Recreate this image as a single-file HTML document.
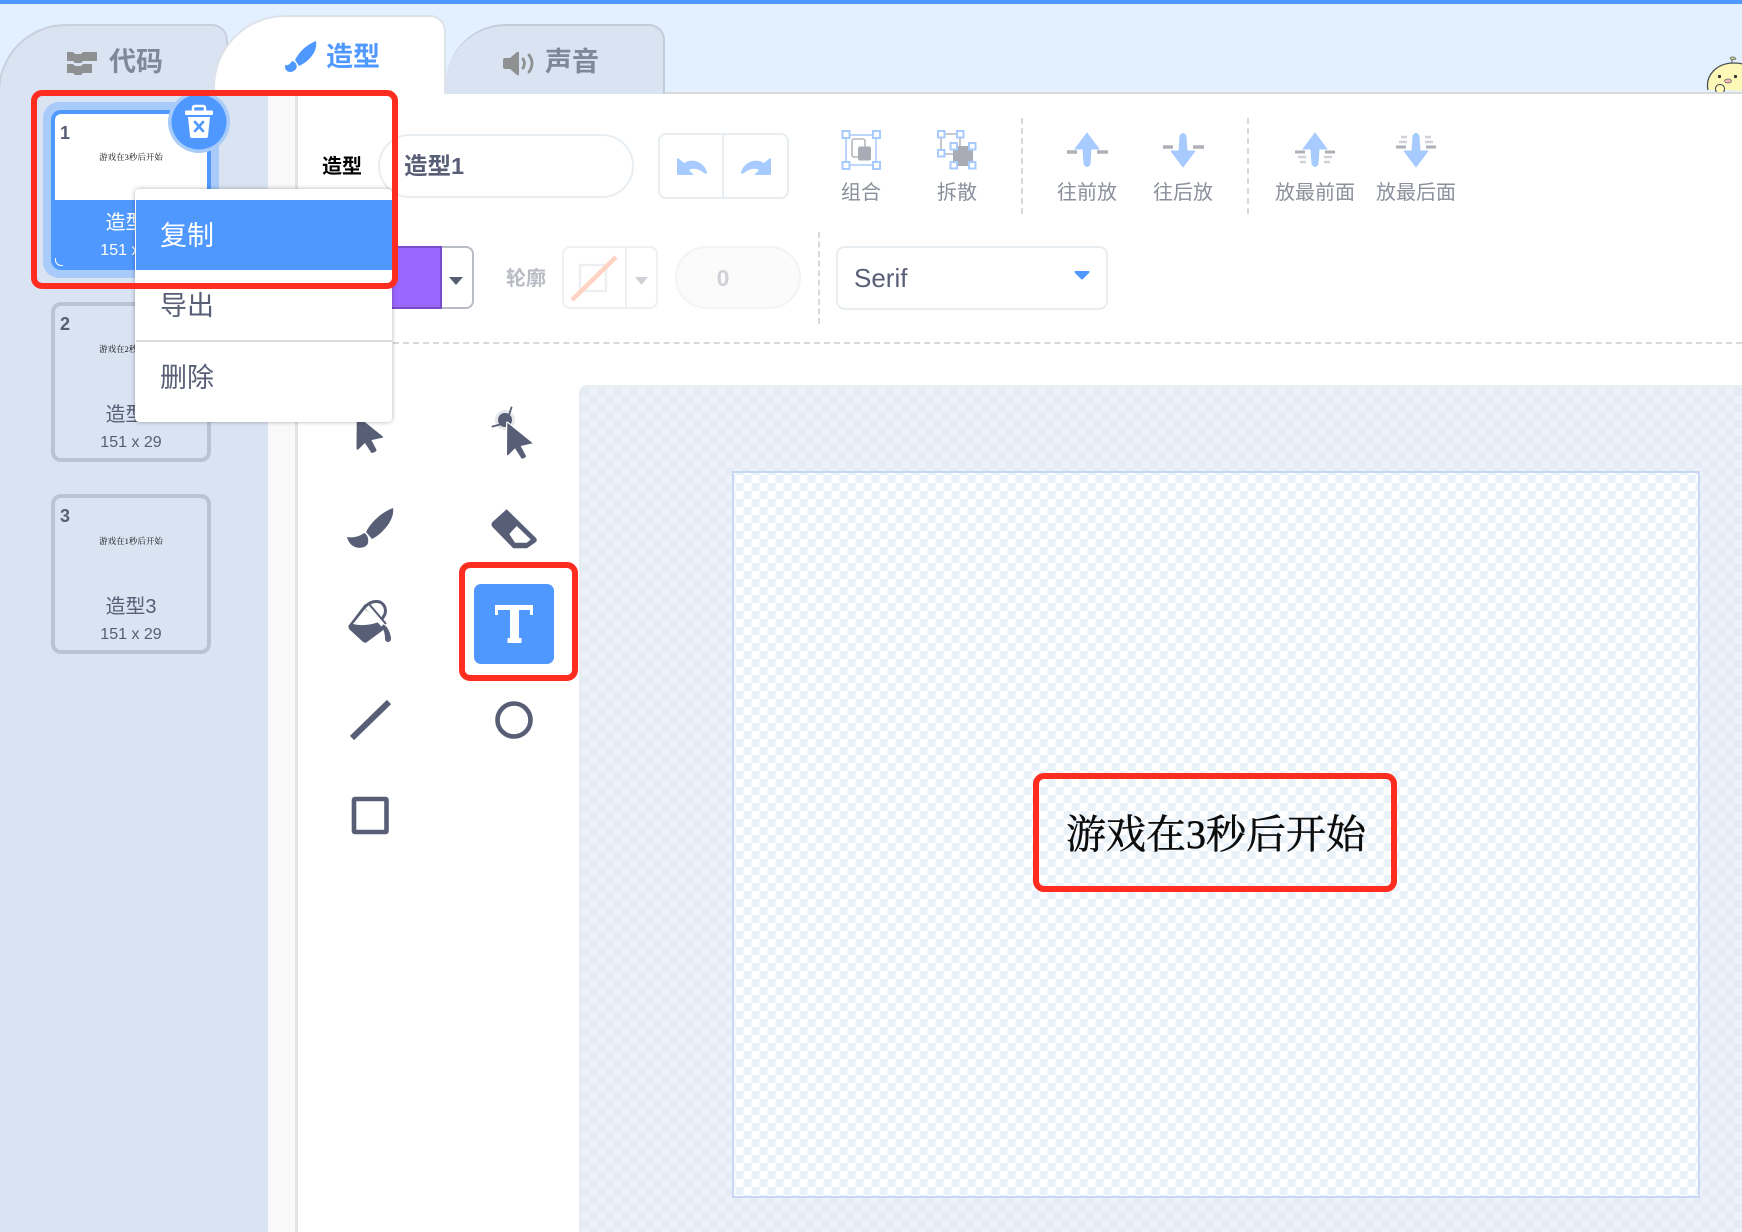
<!DOCTYPE html>
<html lang="zh">
<head>
<meta charset="utf-8">
<title>造型</title>
<style>
html,body{margin:0;padding:0;background:#fff}
#p{position:relative;width:1742px;height:1232px;overflow:hidden;background:#fff;font-family:"Liberation Sans","Noto Sans CJK SC",sans-serif;color:#575e75}
#p div{position:absolute;box-sizing:border-box}
.t{white-space:nowrap;line-height:1}
.c{transform:translateX(-50%)}
.card{left:51px;width:160px;height:160px;border:4px solid #b9c3d3;border-radius:10px}
.thumb{font-family:"Liberation Serif","Noto Serif CJK SC",serif;font-size:8.5px;color:#111;left:131px}
.lbl{left:131px;font-size:20px;color:#575e75}
.sz{left:131px;font-size:16px;color:#575e75}
.num{left:60px;font-size:18px;font-weight:700;color:#575e75}
.tb{font-size:20px;color:#8b8f9c}
.red{border:6px solid #ff2d20;border-radius:11px}
</style>
</head>
<body>
<div id="p">
  <!-- header -->
  <div style="left:0;top:0;width:1742px;height:93px;background:#e3f0ff"></div>
  <div style="left:0;top:0;width:1742px;height:4px;background:#4f98ff"></div>
  <!-- chick -->
  <svg style="position:absolute;left:1700px;top:50px" width="42" height="44" viewBox="1700 50 42 44">
    <path d="M1708 90C1705 76 1716 63 1734 63C1737 63 1740 63 1742 64V91L1728 90Z" fill="#fdf8b7" stroke="none"/>
    <path d="M1708 90C1705 76 1716 63 1734 63C1737 63 1740 63 1742 64" fill="none" stroke="#4c4f57" stroke-width="1.3"/>
    <path d="M1732 63V58" stroke="#666" stroke-width="1.2"/>
    <path d="M1730 58c2-2 5-1 6 1c-2 1-5 1-6-1z" fill="#c9d890" stroke="#666" stroke-width=".8"/>
    <circle cx="1719.500" cy="76.500" r="1.600" fill="#333"/><circle cx="1735.500" cy="76.500" r="1.600" fill="#333"/>
    <ellipse cx="1728" cy="81" rx="3.400" ry="2" fill="#f2b8b8" stroke="#666" stroke-width=".7"/>
    <circle cx="1720" cy="89" r="4.600" fill="#fdf8b7" stroke="#4c4f57" stroke-width="1.100"/>
  </svg>
  <div style="left:0;top:92px;width:1742px;height:2px;background:#d9d9d9"></div>

  <!-- tabs -->
  <div style="left:-2px;top:24px;width:230px;height:70px;background:#d9e3f2;border:2px solid #c8d0dd;border-bottom:0;border-radius:68px 16px 0 0/68px 16px 0 0"></div>
  <div style="left:446px;top:24px;width:219px;height:70px;background:#d9e3f2;border:2px solid #c3ccd9;border-bottom:0;border-left:0;border-radius:60px 16px 0 0/60px 16px 0 0"></div>
  <div style="left:213px;top:15px;width:233px;height:79px;background:#fff;border:2px solid #dde2e9;border-bottom:0;border-radius:72px 16px 0 0/72px 16px 0 0"></div>
  <div class="t" style="left:109px;top:49px;font-size:27px;font-weight:700;color:#7f8898">代码</div>
  <div class="t" style="left:326px;top:44px;font-size:27px;font-weight:700;color:#4f98ff">造型</div>
  <div class="t" style="left:545px;top:49px;font-size:27px;font-weight:700;color:#7f8898">声音</div>

  <!-- sidebar -->
  <div style="left:0;top:94px;width:268px;height:1138px;background:#d9e3f2"></div>
  <div style="left:268px;top:94px;width:28px;height:1138px;background:#f9f9f9"></div>
  <div style="left:295px;top:94px;width:3px;height:1138px;background:#e3e3e3"></div>

  <!-- cards -->
  <div style="left:43px;top:102px;width:176px;height:176px;background:#a9cbf9;border-radius:16px"></div>
  <div style="left:51px;top:110px;width:160px;height:160px;background:#4f98ff;border-radius:10px"></div>
  <div style="left:55px;top:114px;width:152px;height:86px;background:#fff;border-radius:6px 6px 0 0"></div>
  <div class="t num" style="top:124px;">1</div>
  <div class="t thumb c" style="top:153px">游戏在3秒后开始</div>
  <div class="t lbl c" style="top:213px;color:#fff">造型1</div>
  <div class="t sz c" style="top:243px;color:#fff">151 x 29</div>
  <div style="left:55px;top:258px;width:8px;height:8px;border-left:1px solid #fff;border-bottom:1px solid #fff;border-radius:0 0 0 6px"></div>

  <div class="card" style="top:302px"></div>
  <div class="t num" style="top:315px">2</div>
  <div class="t thumb c" style="top:345px">游戏在2秒后开始</div>
  <div class="t lbl c" style="top:405px">造型2</div>
  <div class="t sz c" style="top:435px">151 x 29</div>

  <div class="card" style="top:494px"></div>
  <div class="t num" style="top:507px">3</div>
  <div class="t thumb c" style="top:537px">游戏在1秒后开始</div>
  <div class="t lbl c" style="top:597px">造型3</div>
  <div class="t sz c" style="top:627px">151 x 29</div>

  <!-- name row -->
  <div class="t" style="left:322px;top:157px;font-size:20px;font-weight:700;color:#000">造型</div>
  <div style="left:378px;top:134px;width:256px;height:64px;border:2px solid #e8edf1;border-radius:32px;background:#fff"></div>
  <div class="t" style="left:404px;top:155px;font-size:23.500px;font-weight:700;color:#575e75">造型1</div>
  <div style="left:658px;top:133px;width:131px;height:66px;border:2px solid #e8edf1;border-radius:8px"></div>
  <div style="left:722px;top:134px;width:2px;height:64px;background:#e8edf1"></div>

  <div class="t tb c" style="left:861px;top:183px">组合</div>
  <div class="t tb c" style="left:957px;top:183px">拆散</div>
  <div class="t tb c" style="left:1087px;top:183px">往前放</div>
  <div class="t tb c" style="left:1183px;top:183px">往后放</div>
  <div class="t tb c" style="left:1315px;top:183px">放最前面</div>
  <div class="t tb c" style="left:1416px;top:183px">放最后面</div>
  <div style="left:1021px;top:118px;height:96px;border-left:2px dashed #d9d9d9"></div>
  <div style="left:1247px;top:118px;height:96px;border-left:2px dashed #d9d9d9"></div>

  <!-- row 2 -->
  <div style="left:380px;top:246px;width:62px;height:63px;background:#9966ff;border-top:2px solid #774dcb;border-bottom:2px solid #774dcb;border-right:2px solid #774dcb"></div>
  <div style="left:442px;top:246px;width:32px;height:63px;background:#fff;border:2px solid #b8bcc4;border-left:0;border-radius:0 8px 8px 0"></div>
  <div class="t" style="left:506px;top:269px;font-size:20px;color:#b8bbc3;font-weight:700">轮廓</div>
  <div style="left:562px;top:246px;width:96px;height:63px;border:2px solid #eef1f4;border-radius:8px"></div>
  <div style="left:625px;top:247px;width:2px;height:61px;background:#eef1f4"></div>
  <div style="left:675px;top:246px;width:126px;height:63px;background:#fbfbfb;border:2px solid #f1f3f6;border-radius:32px"></div>
  <div class="t c" style="left:723px;top:267px;font-size:23px;font-weight:700;color:#cfd1d6">0</div>
  <div style="left:818px;top:232px;height:92px;border-left:2px dashed #d9d9d9"></div>
  <div style="left:836px;top:246px;width:272px;height:64px;border:2px solid #e8edf1;border-radius:9px"></div>
  <div class="t" style="left:854px;top:265px;font-size:26px;color:#575e75">Serif</div>
  <div style="left:393px;top:342px;width:1349px;height:0;border-top:2px dashed #d9d9d9"></div>

  <!-- canvas -->
  <div style="left:579px;top:385px;width:1170px;height:860px;border:3px solid #e8edf1;border-radius:8px;background-clip:padding-box;background-image:conic-gradient(#edf2fa 25%,#e5ecf6 0 50%,#edf2fa 0 75%,#e5ecf6 0);background-size:16px 16px;background-origin:padding-box"></div>
  <div style="left:732px;top:471px;width:968px;height:727px;border:2px solid #c6d8f3;background-clip:padding-box;background-origin:padding-box;background-image:conic-gradient(#e9f1fa 25%,#fff 0 50%,#e9f1fa 0 75%,#fff 0);background-size:16px 16px;background-position:1.500px 2px"></div>
  <div class="t" style="left:1066px;top:815px;font-size:40px;color:#0c0c0c;-webkit-text-stroke:.5px #0c0c0c;font-family:'Liberation Serif','Noto Serif CJK SC',serif">游戏在3秒后开始</div>

  <!-- text tool -->
  <div style="left:474px;top:584px;width:80px;height:80px;background:#4f98ff;border-radius:7px"></div>

  <!-- icons -->
  <svg style="position:absolute;left:0;top:0" width="1742" height="1232" viewBox="0 0 1742 1232">
    <!-- code icon -->
    <path d="M67 52h6l2 2h6l2-2h14v9H83l-2 2h-6l-2-2h-6zM67 64h6l2 2h6l2-2h9v9H83l-2 2h-6l-2-2h-6z" fill="#8f9092"/>
    <!-- tab brush -->
    <path d="M316 41C318 52 308 62 299 66L295 60C299 52 306 45 316 41Z" fill="#4f98ff"/>
    <path d="M292 61C297 62 298 68 295 70C291 74 284 72 285 65C288 66 290 64 292 61Z" fill="#4f98ff"/>
    <!-- speaker -->
    <path d="M503 60q0-2 2-2h5l7-6q2-1 2 1v21q0 2-2 1l-7-6h-5q-2 0-2-2z" fill="#8f9092"/>
    <path d="M523 59q3 4 0 9M529 55q6 8 0 17" fill="none" stroke="#8f9092" stroke-width="2.800" stroke-linecap="round"/>

    <!-- trash -->
    <circle cx="199" cy="122" r="31" fill="#a9cbf9"/>
    <circle cx="199" cy="122" r="27.500" fill="#4f98ff"/>
    <path d="M193 111v-3q0-2 2-2h8q2 0 2 2v3" fill="none" stroke="#fff" stroke-width="2.400"/>
    <rect x="185" y="110.500" width="28" height="4.500" rx="1" fill="#fff"/>
    <path d="M188 117h22l-2 19q0 2-2 2h-14q-2 0-2-2z" fill="#fff"/>
    <path d="M195 122l8 9M203 122l-8 9" stroke="#4f98ff" stroke-width="2.600" stroke-linecap="round"/>

    <!-- undo/redo -->
    <path d="M677 159q0-1 1-1l6 5C692 158 703 161 707 172Q707 175 704 173C698 168 692 168 689 170L694 175H678q-1 0-1-1Z" fill="#a8cbff"/>
    <path d="M771 159q0-1-1-1l-6 5C756 158 745 161 741 172Q741 175 744 173C750 168 756 168 759 170L754 175H770q1 0 1-1Z" fill="#a8cbff"/>

    <!-- group -->
    <rect x="846" y="135" width="30" height="30" fill="none" stroke="#bdd6fb" stroke-width="2"/>
    <rect x="852" y="139" width="13" height="18" rx="2" fill="#fff" stroke="#b5b7bd" stroke-width="1.600"/>
    <rect x="858" y="146.500" width="13" height="14" rx="2" fill="#a9acb4"/>
    <g fill="#fff" stroke="#a8cbff" stroke-width="2"><rect x="842.500" y="131" width="7" height="7"/><rect x="873" y="131" width="7" height="7"/><rect x="842.500" y="162" width="7" height="7"/><rect x="873" y="162" width="7" height="7"/></g>
    <!-- ungroup -->
    <path d="M941 134h19M941 134v20h12M960 134v12" stroke="#b5b7bd" stroke-width="1.600" fill="none"/>
    <rect x="953" y="146" width="20" height="20" fill="#a9acb4"/>
    <g fill="#fff" stroke="#a8cbff" stroke-width="2"><rect x="938" y="131" width="6.500" height="6.500"/><rect x="957" y="131" width="6.500" height="6.500"/><rect x="938" y="150" width="6.500" height="6.500"/><rect x="950.500" y="143" width="6.500" height="6.500"/><rect x="969" y="143" width="6.500" height="6.500"/><rect x="950.500" y="162" width="6.500" height="6.500"/><rect x="969" y="162" width="6.500" height="6.500"/></g>

    <!-- forward -->
    <path d="M1087 133L1099 149H1091L1090 164Q1087 169 1084 164L1083 149H1075Z" fill="#a8cbff" stroke="#a8cbff" stroke-linejoin="round"/>
    <path d="M1067 152H1077M1097 152H1108" stroke="#aeb0b7" stroke-width="3.400"/>
    <!-- backward -->
    <path d="M1183 167L1171 151H1179L1180 136Q1183 131 1186 136L1187 151H1195Z" fill="#a8cbff" stroke="#a8cbff" stroke-linejoin="round"/>
    <path d="M1163 147H1173M1193 147H1204" stroke="#aeb0b7" stroke-width="3.400"/>
    <!-- front -->
    <path d="M1315 133L1327 149H1319L1318 164Q1315 169 1312 164L1311 149H1303Z" fill="#a8cbff" stroke="#a8cbff" stroke-linejoin="round"/>
    <path d="M1295 152H1305M1325 152H1335" stroke="#aeb0b7" stroke-width="3"/>
    <path d="M1298 157H1306M1324 157H1332M1300 162H1306M1324 162H1330" stroke="#cfd1d6" stroke-width="2.600"/>
    <!-- back -->
    <path d="M1416 167L1404 151H1412L1413 136Q1416 131 1419 136L1420 151H1428Z" fill="#a8cbff" stroke="#a8cbff" stroke-linejoin="round"/>
    <path d="M1396 147H1406M1426 147H1436" stroke="#aeb0b7" stroke-width="3"/>
    <path d="M1399 142H1407M1425 142H1433M1401 137H1407M1425 137H1431" stroke="#cfd1d6" stroke-width="2.600"/>

    <!-- row 2 carets -->
    <path d="M449 277H463L456 285Z" fill="#575e75"/>
    <rect x="580" y="265" width="26" height="26" fill="none" stroke="#eceef1" stroke-width="2.400"/>
    <path d="M572 300L616 257" stroke="#ffd2c2" stroke-width="4.500"/>
    <path d="M635 277H648L641.500 285Z" fill="#cfd1d6"/>
    <path d="M1075 271H1089Q1090 271 1089 273L1083 279Q1082 280 1081 279L1075 273Q1074 271 1075 271Z" fill="#4f98ff"/>

    <!-- tools -->
    <g fill="#575e75">
      <path d="M507.300 422.700L532.700 443.300L520.700 446L526 456Q526 458 521.700 458.700L515 448.300L508.300 455Q507 456 507 454Z" transform="translate(-150,-6.200)" stroke="#575e75" stroke-linejoin="round"/>
      <circle cx="505" cy="420" r="10" fill="#e6e7ea"/>
      <circle cx="505" cy="420" r="7"/>
      <path d="M511.700 406.700L508 418M491.700 426.700L502 424" stroke="#575e75" stroke-width="1.800"/>
      <path d="M507.300 422.700L532.700 443.300L520.700 446L526 456Q526 458 521.700 458.700L515 448.300L508.300 455Q507 456 507 454Z" stroke="#fff" stroke-width="2.400" paint-order="stroke" stroke-linejoin="round"/>
      <path d="M393 508C395 520 382 534 372 539L366 532C371 522 382 512 393 508Z"/>
      <path d="M364 533C369 535 369 543 367 545C362 550 350 549 347 537C352 538 359 537 364 533Z"/>
      <path d="M506.700 509.300L536 538Q537.500 540 536 542L527 548.300H513.300L492.500 527Q490.500 524 492.500 522Z"/>
      <path d="M516.700 526L530.700 539.500L526.700 542.700H515L509.300 534Z" fill="#fff"/>
      <path d="M348.300 626L365 604L386 626.700L382 631L366 642.700Q364 643 362 641L349 629Z"/>
      <path d="M353 624L365 609L379 622Q365 627 353 624Z" fill="#fff"/>
      <path d="M366 606Q372 600 380 602Q387 606 385 614L381 621" fill="none" stroke="#575e75" stroke-width="3"/>
      <path d="M367 607L383 625" stroke="#fff" stroke-width="4.500"/>
      <path d="M369 604L386 624" stroke="#575e75" stroke-width="2"/>
      <path d="M386 626q4 5 5 12q0 4-3 4q-3 0-3-4q0-5-2-9z"/>
    </g>
    <path d="M352 738L389 702" stroke="#575e75" stroke-width="6"/>
    <circle cx="514" cy="720" r="16.500" fill="none" stroke="#575e75" stroke-width="4.600"/>
    <rect x="354" y="799" width="32.500" height="33" rx="1" fill="#fff" stroke="#575e75" stroke-width="4.600"/>
    <path d="M495 605H533V615H530V610H519V638H521.500V643H507.500V638H510V610H498V615H495Z" fill="#fff"/>
  </svg>

  <!-- menu -->
  <div style="left:135px;top:189px;width:257px;height:233px;background:#fff;border-radius:4px;box-shadow:0 0 5px rgba(0,0,0,.3)"></div>
  <div style="left:136px;top:200px;width:256px;height:70px;background:#4f98ff"></div>
  <div class="t" style="left:160px;top:222.500px;font-size:27px;color:#fff">复制</div>
  <div class="t" style="left:160px;top:293px;font-size:27px;color:#575e75">导出</div>
  <div style="left:136px;top:340px;width:256px;height:2px;background:#dcdcdc"></div>
  <div class="t" style="left:160px;top:364.500px;font-size:27px;color:#575e75">删除</div>

  <!-- red highlight boxes -->
  <div class="red" style="left:31px;top:90px;width:367px;height:199px"></div>
  <div class="red" style="left:459px;top:562px;width:119px;height:119px"></div>
  <div class="red" style="left:1033px;top:773px;width:364px;height:119px"></div>
</div>
</body>
</html>
